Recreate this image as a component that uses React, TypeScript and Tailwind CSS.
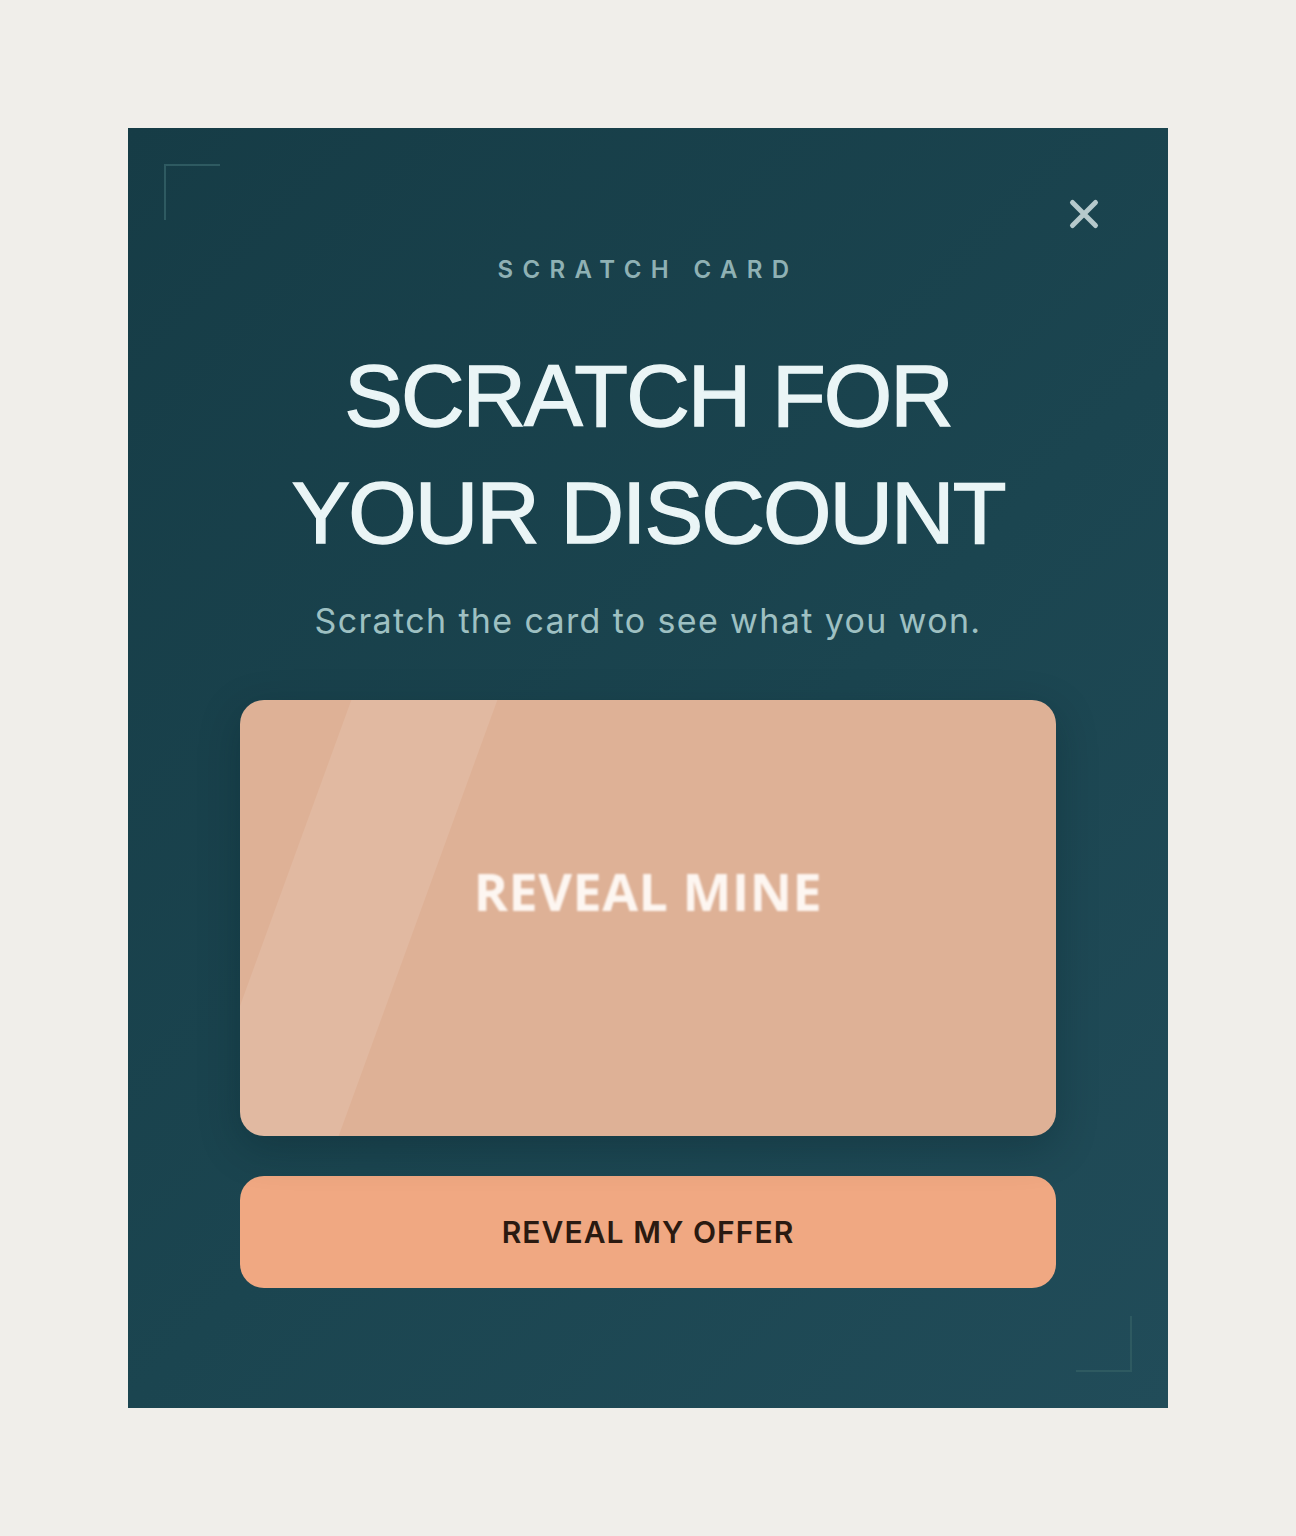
import React from 'react';

function CornerMark({ position }: { position: 'tl' | 'br' }) {
  const cls =
    position === 'tl'
      ? 'left-[36px] top-[36px] border-l-2 border-t-2'
      : 'right-[36px] bottom-[36px] border-r-2 border-b-2';
  return <div className={`absolute h-[56px] w-[56px] border-[#2e5a61] ${cls}`} />;
}

function CloseIcon() {
  return (
    <svg width="36" height="36" viewBox="0 0 36 36" fill="none">
      <path d="M6.5 6.5 L29.5 29.5 M29.5 6.5 L6.5 29.5" stroke="#b6c9cc" strokeWidth="5" strokeLinecap="round" />
    </svg>
  );
}

export default function App() {
  return (
    <div className="min-h-screen bg-[#f0eeea] p-[128px]">
      <div className="relative mx-auto flex w-[1040px] h-[1280px] flex-col items-center bg-[linear-gradient(135deg,#163c46_0%,#1b4550_55%,#214c59_100%)] pt-[126px]">
        <CornerMark position="tl" />
        <CornerMark position="br" />
        <button className="absolute right-[66px] top-[68px] flex h-[36px] w-[36px] items-center justify-center">
          <CloseIcon />
        </button>

        <p className="text-[24px] leading-[32px] font-semibold tracking-[0.39em] text-[#8fb1b4] [font-family:Inter,sans-serif]">
          SCRATCH CARD
        </p>

        <h1 className="mt-[51px] text-center text-[88px] leading-[117px] tracking-[-0.022em] text-[#eaf5f6] [-webkit-text-stroke:1.4px_#eaf5f6] [font-family:'Liberation_Sans',Arial,sans-serif]">
          SCRATCH FOR
          <br />
          YOUR DISCOUNT
        </h1>

        <p className="mt-[28px] text-[34px] leading-[44px] tracking-[0.04em] text-[#9ec0c2] [font-family:Inter,sans-serif]">
          Scratch the card to see what you won.
        </p>

        <div className="relative mt-[57px] flex h-[436px] w-[816px] items-center justify-center overflow-hidden rounded-[24px] bg-[#deb196] shadow-[0_12px_40px_rgba(8,30,36,0.3)]">
          <div className="absolute top-0 bottom-0 left-[32px] w-[146px] skew-x-[-20deg] bg-white/10" />
          <span className="relative mb-[54px] text-[52px] font-bold tracking-[0.01em] text-[#fdf6f1] blur-[0.8px] [font-family:'Open_Sans',sans-serif]">
            REVEAL MINE
          </span>
        </div>

        <button className="mt-[40px] flex h-[112px] w-[816px] items-center justify-center rounded-[24px] bg-[#f0a882] text-[30px] font-semibold tracking-[0.035em] text-[#2a1a11] [font-family:Inter,sans-serif]">
          REVEAL MY OFFER
        </button>
      </div>
    </div>
  );
}
